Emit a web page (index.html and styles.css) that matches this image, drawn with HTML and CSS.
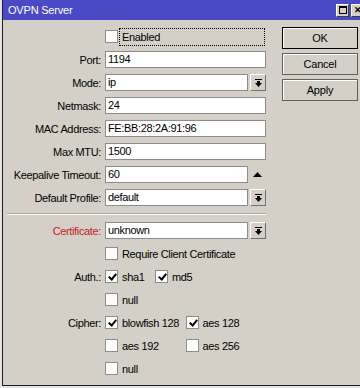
FILE: index.html
```html
<!DOCTYPE html>
<html lang="en">
<head>
  <meta charset="UTF-8">
  <meta name="viewport" content="width=device-width, initial-scale=1.0">
  <title>OVPN Server</title>
  <link rel="stylesheet" href="styles.css">
</head>
<body>
  <div class="window">
    <!-- Title bar -->
    <div class="titlebar">
      <span class="title">OVPN Server</span>
      <div class="title-btns">
        <span class="tbtn"><span class="max-icon"></span></span>
        <span class="tbtn close">&#x2715;</span>
      </div>
    </div>

    <div class="content">
      <!-- Settings form -->
      <div class="form">
        <div class="row">
          <span class="label"></span>
          <span class="box"></span>
          <span class="focus-text">Enabled</span>
        </div>
        <div class="row">
          <span class="label">Port:</span>
          <span class="field">1194</span>
        </div>
        <div class="row">
          <span class="label">Mode:</span>
          <span class="field short">ip</span>
          <span class="drop"><svg width="7" height="8" viewBox="0 0 7 8"><rect x="0" y="0" width="7" height="1"/><rect x="2" y="2" width="3" height="2"/><path d="M0 4h7l-3.5 4z"/></svg></span>
        </div>
        <div class="row">
          <span class="label">Netmask:</span>
          <span class="field">24</span>
        </div>
        <div class="row">
          <span class="label">MAC Address:</span>
          <span class="field">FE:BB:28:2A:91:96</span>
        </div>
        <div class="row">
          <span class="label">Max MTU:</span>
          <span class="field">1500</span>
        </div>
        <div class="row">
          <span class="label">Keepalive Timeout:</span>
          <span class="field short">60</span>
          <span class="up"><svg width="9" height="5" viewBox="0 0 9 5"><path d="M0 5h9l-4.5-5z"/></svg></span>
        </div>
        <div class="row">
          <span class="label">Default Profile:</span>
          <span class="field short">default</span>
          <span class="drop"><svg width="7" height="8" viewBox="0 0 7 8"><rect x="0" y="0" width="7" height="1"/><rect x="2" y="2" width="3" height="2"/><path d="M0 4h7l-3.5 4z"/></svg></span>
        </div>

        <div class="separator"></div>

        <div class="row">
          <span class="label red">Certificate:</span>
          <span class="field short">unknown</span>
          <span class="drop"><svg width="7" height="8" viewBox="0 0 7 8"><rect x="0" y="0" width="7" height="1"/><rect x="2" y="2" width="3" height="2"/><path d="M0 4h7l-3.5 4z"/></svg></span>
        </div>
        <div class="row">
          <span class="label"></span>
          <span class="opt"><span class="box"></span>Require Client Certificate</span>
        </div>
        <div class="row auth">
          <span class="label">Auth.:</span>
          <span class="opt"><span class="box checked"></span>sha1</span>
          <span class="opt"><span class="box checked"></span>md5</span>
        </div>
        <div class="row auth">
          <span class="label"></span>
          <span class="opt"><span class="box"></span>null</span>
        </div>
        <div class="row cipher">
          <span class="label">Cipher:</span>
          <span class="opt"><span class="box checked"></span>blowfish 128</span>
          <span class="opt"><span class="box checked"></span>aes 128</span>
        </div>
        <div class="row cipher">
          <span class="label"></span>
          <span class="opt"><span class="box"></span>aes 192</span>
          <span class="opt"><span class="box"></span>aes 256</span>
        </div>
        <div class="row cipher">
          <span class="label"></span>
          <span class="opt"><span class="box"></span>null</span>
        </div>
      </div>

      <!-- Dialog buttons -->
      <div class="buttons">
        <button class="btn default">OK</button>
        <button class="btn">Cancel</button>
        <button class="btn">Apply</button>
      </div>
    </div>
  </div>
</body>
</html>
```

FILE: styles.css
```css
/* General Styling */
body {
  margin: 0;
  background: #e4e4e4;
  font-family: "Liberation Sans", Arial, sans-serif;
  font-size: 11px;
  letter-spacing: -0.35px;
  color: #000;
  overflow: hidden;
}

.window {
  width: 370px;
  height: 385px;
  margin-left: 2px;
  background: #d4d0c8;
  border-left: 1px solid #202020;
  border-bottom: 1px solid #202020;
}

/* Title bar */
.titlebar {
  height: 20px;
  background: #4a4ac6;
  display: flex;
  align-items: center;
  justify-content: space-between;
}

.title {
  color: #fff;
  padding-left: 5px;
  font-size: 11px;
  letter-spacing: -0.2px;
}

.title-btns {
  display: flex;
  gap: 2px;
  margin-right: 9px;
}

.tbtn {
  width: 11px;
  height: 11px;
  background: #d4d0c8;
  border: 1px solid;
  border-color: #fff #404040 #404040 #fff;
  display: flex;
  justify-content: center;
  align-items: center;
  font-size: 9px;
  font-weight: bold;
  letter-spacing: 0;
}

.max-icon {
  width: 6px;
  height: 5px;
  border: 1px solid #000;
  border-top-width: 2px;
}

/* Content */
.content {
  display: flex;
  gap: 16px;
  padding-top: 5px;
}

.form {
  width: 263px;
}

.row {
  height: 23px;
  display: flex;
  align-items: center;
}

.label {
  width: 98px;
  margin-right: 4px;
  text-align: right;
  flex-shrink: 0;
}

.label.red {
  color: #c42020;
}

.field {
  width: 159px;
  height: 15px;
  line-height: 15px;
  padding-left: 2px;
  background: #fff;
  border: 1px solid #8c8c8c;
  box-sizing: content-box;
}

.field.short {
  width: 141px;
}

.drop {
  width: 14px;
  height: 15px;
  margin-left: 2px;
  background: #d4d0c8;
  border: 1px solid;
  border-color: #fff #707070 #707070 #fff;
  display: flex;
  justify-content: center;
  align-items: center;
}

.up {
  width: 18px;
  display: flex;
  justify-content: center;
  padding-bottom: 1px;
}

.separator {
  height: 0;
  margin: 4px 0 4px 4px;
  border-top: 1px solid #a8a8a8;
  border-bottom: 1px solid #fff;
}

/* Checkboxes */
.box {
  width: 11px;
  height: 11px;
  background: #fff;
  border: 1px solid #8c8c8c;
  flex-shrink: 0;
  position: relative;
}

.box.checked::after {
  content: "";
  position: absolute;
  left: 2px;
  top: 1px;
  width: 3px;
  height: 6px;
  border: solid #000;
  border-width: 0 2px 2px 0;
  transform: rotate(40deg);
  left: 4px;
}

.focus-text {
  margin-left: 1px;
  width: 142px;
  height: 16px;
  line-height: 16px;
  padding-left: 2px;
  border: 1px dotted #000;
}

.opt {
  display: flex;
  align-items: center;
  gap: 4px;
}

.auth .opt {
  width: 50px;
}

.cipher .opt {
  width: 85px;
}

/* Buttons */
.buttons {
  display: flex;
  flex-direction: column;
  gap: 4px;
  padding-top: 2px;
}

.btn {
  width: 76px;
  height: 22px;
  padding: 0;
  font-family: inherit;
  font-size: 11px;
  letter-spacing: -0.2px;
  color: #000;
  background: #d4d0c8;
  border: 1px solid #606060;
  box-shadow: inset 1px 1px 0 #fff;
}

.btn.default {
  border-color: #000;
}
```
